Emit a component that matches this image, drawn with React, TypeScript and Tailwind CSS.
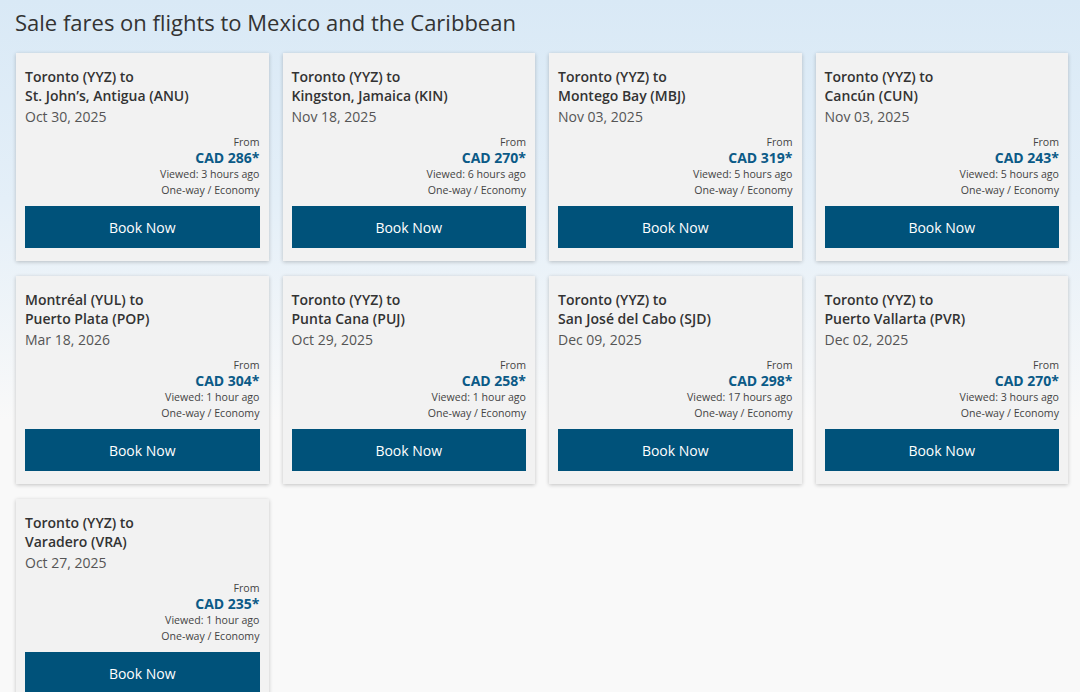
// Sale fares grid — Mexico & Caribbean

const fares = [
  { from: "Toronto (YYZ) to", to: "St. John’s, Antigua (ANU)", date: "Oct 30, 2025", price: "CAD 286*", viewed: "Viewed: 3 hours ago" },
  { from: "Toronto (YYZ) to", to: "Kingston, Jamaica (KIN)", date: "Nov 18, 2025", price: "CAD 270*", viewed: "Viewed: 6 hours ago" },
  { from: "Toronto (YYZ) to", to: "Montego Bay (MBJ)", date: "Nov 03, 2025", price: "CAD 319*", viewed: "Viewed: 5 hours ago" },
  { from: "Toronto (YYZ) to", to: "Cancún (CUN)", date: "Nov 03, 2025", price: "CAD 243*", viewed: "Viewed: 5 hours ago" },
  { from: "Montréal (YUL) to", to: "Puerto Plata (POP)", date: "Mar 18, 2026", price: "CAD 304*", viewed: "Viewed: 1 hour ago" },
  { from: "Toronto (YYZ) to", to: "Punta Cana (PUJ)", date: "Oct 29, 2025", price: "CAD 258*", viewed: "Viewed: 1 hour ago" },
  { from: "Toronto (YYZ) to", to: "San José del Cabo (SJD)", date: "Dec 09, 2025", price: "CAD 298*", viewed: "Viewed: 17 hours ago" },
  { from: "Toronto (YYZ) to", to: "Puerto Vallarta (PVR)", date: "Dec 02, 2025", price: "CAD 270*", viewed: "Viewed: 3 hours ago" },
  { from: "Toronto (YYZ) to", to: "Varadero (VRA)", date: "Oct 27, 2025", price: "CAD 235*", viewed: "Viewed: 1 hour ago" },
];

type Fare = (typeof fares)[number];

function FareCard({ fare }: { fare: Fare }) {
  return (
    <div className="bg-[#f2f2f2] shadow-[0_1px_4px_rgba(0,0,0,0.22)] pt-[14px] px-[9px] pb-[13px] flex flex-col">
      <div className="text-[14px] leading-[19px] font-semibold text-[#333]">
        <div>{fare.from}</div>
        <div>{fare.to}</div>
      </div>
      <div className="text-[14px] leading-[22px] text-[#555] mt-[1px]">{fare.date}</div>
      <div className="mt-[6px] flex flex-col items-end text-[10.6px] leading-[16px] text-[#444]">
        <div>From</div>
        <div className="text-[14px] font-bold text-[#0b5a87]">{fare.price}</div>
        <div>{fare.viewed}</div>
        <div>One-way / Economy</div>
      </div>
      <button className="mt-[8px] h-[42px] w-full bg-[#00527a] text-white text-[14px] font-normal">
        Book Now
      </button>
    </div>
  );
}

export default function App() {
  return (
    <div
      className="w-[1080px] h-[692px] overflow-hidden bg-[linear-gradient(to_bottom,#d9e9f6_0px,#e4eff8_200px,#f9f9f9_420px,#f9f9f9_100%)] text-[#333]"
      style={{ fontFamily: '"Open Sans", "Noto Sans", sans-serif' }}
    >
      <h1 className="pl-[15px] pt-[7px] text-[22px] leading-[30px] font-normal text-[#333]">
        Sale fares on flights to Mexico and the Caribbean
      </h1>
      <div className="grid grid-cols-4 gap-x-[14px] gap-y-[15px] pl-[16px] pr-[12px] mt-[16px]">
        {fares.map((f, i) => (
          <FareCard key={i} fare={f} />
        ))}
      </div>
    </div>
  );
}
